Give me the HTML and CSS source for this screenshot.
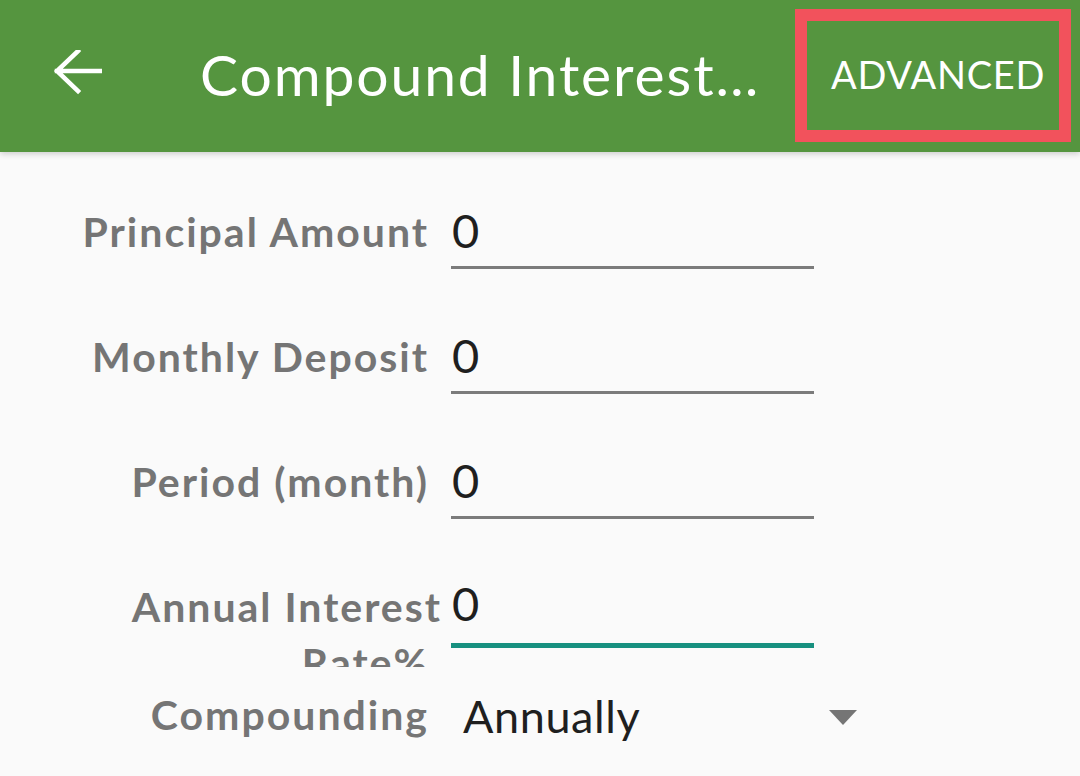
FILE: index.html
```html
<!DOCTYPE html>
<html>
<head>
<meta charset="utf-8">
<link rel="stylesheet" href="styles.css">
</head>
<body>
<header class="appbar">
  <div class="back">
    <svg width="48" height="48" viewBox="0 0 48 48"><path d="M3 21 H46 M24 1 L3 21 L24 41" fill="none" stroke="#fff" stroke-width="4.5" stroke-linecap="square"/></svg>
  </div>
  <div class="title">Compound Interest…</div>
  <div class="action">ADVANCED</div>
</header>
<main class="form">
  <div class="row">
    <div class="label">Principal Amount</div>
    <div class="field">0</div>
  </div>
  <div class="row">
    <div class="label">Monthly Deposit</div>
    <div class="field">0</div>
  </div>
  <div class="row">
    <div class="label">Period (month)</div>
    <div class="field">0</div>
  </div>
  <div class="row">
    <div class="label label-wrap"><span class="line1">Annual Interest</span> <span class="line2">Rate%</span></div>
    <div class="field field-focus">0</div>
  </div>
  <div class="row row-spinner">
    <div class="label">Compounding</div>
    <div class="spinner">
      <span class="spinner-value">Annually</span>
      <span class="caret"></span>
    </div>
  </div>
</main>
</body>
</html>
```

FILE: styles.css
```css
html, body {
  margin: 0;
  padding: 0;
}
body {
  width: 1080px;
  height: 776px;
  overflow: hidden;
  background: #fafafa;
  font-family: Lato, "Open Sans", sans-serif;
}
.appbar {
  height: 152px;
  background: #55953f;
  display: flex;
  align-items: center;
  box-shadow: 0 2px 6px rgba(0,0,0,0.18);
  position: relative;
  z-index: 1;
}
.back {
  width: 48px;
  height: 48px;
  margin-left: 54px;
  margin-top: -4px;
}
.back svg { display: block; }
.title {
  margin-left: 98px;
  color: #fff;
  font-size: 57px;
  font-weight: 400;
  letter-spacing: 1.9px;
  white-space: nowrap;
  flex: 1;
  margin-top: -4px;
}
.action {
  align-self: flex-start;
  margin-top: 9px;
  margin-right: 9px;
  border: 12px solid #f2525c;
  display: flex;
  align-items: center;
  justify-content: center;
  color: #fff;
  font-size: 38px;
  letter-spacing: 0.7px;
  padding-left: 10px;
  padding-bottom: 4px;
  box-sizing: border-box;
  width: 276px;
  height: 133px;
}
.form {
  padding-top: 38px;
}
.row {
  display: flex;
  align-items: flex-start;
  height: 125px;
}
.label {
  width: 429px;
  flex: none;
  box-sizing: border-box;
  text-align: right;
  color: #757575;
  font-weight: 700;
  font-size: 41px;
  letter-spacing: 2px;
  line-height: 56px;
  padding-top: 14px;
  padding-left: 40px;
  white-space: nowrap;
}
.label-wrap {
  height: 102px;
  overflow-x: visible;
  overflow-y: clip;
  white-space: normal;
}
.line1 {
  display: block;
  margin-right: -13px;
  white-space: nowrap;
}
.line2 {
  display: block;
}
.field {
  margin-left: 22px;
  width: 363px;
  flex: none;
  color: #1f1f1f;
  font-size: 47px;
  font-weight: 400;
  line-height: 56px;
  padding-top: 12px;
  box-sizing: border-box;
  height: 79px;
  padding-left: 1px;
  border-bottom: 3px solid #7b7b7b;
}
.field-focus {
  border-bottom: 5px solid #17907f;
  height: 83px;
  padding-top: 10px;
}
.row-spinner {
  height: auto;
}
.row-spinner .label {
  padding-top: 0;
  line-height: 52px;
  margin-top: -1px;
}
.spinner {
  margin-left: 34px;
  width: 394px;
  display: flex;
  align-items: center;
  height: 52px;
}
.spinner-value {
  flex: 1;
  color: #1f1f1f;
  font-size: 45px;
  font-weight: 400;
  letter-spacing: 0.6px;
  line-height: 52px;
}
.caret {
  width: 0;
  height: 0;
  border-left: 14px solid transparent;
  border-right: 14px solid transparent;
  border-top: 15px solid #757575;
  margin-top: 2px;
}
```
